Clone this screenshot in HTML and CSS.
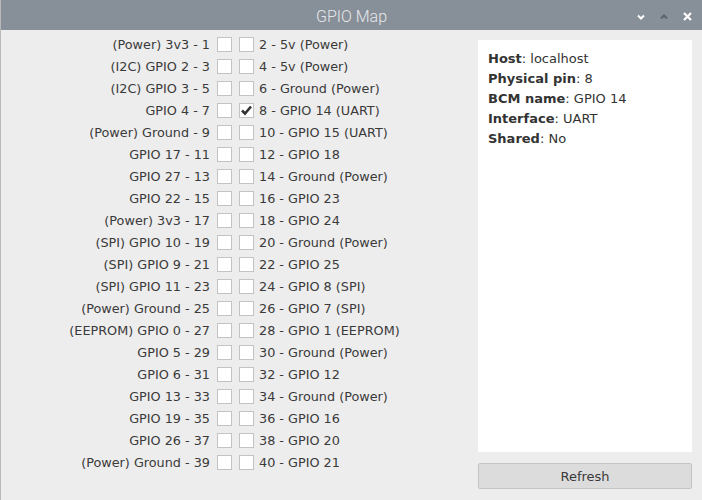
FILE: index.html
```html
<!DOCTYPE html>
<html>
<head>
<meta charset="utf-8">
<link rel="stylesheet" href="styles.css">
</head>
<body>
<div class="window">
  <div class="titlebar">
    <span class="title">GPIO Map</span>
    <div class="controls">
      <svg class="ctl" width="8" height="6" viewBox="0 0 8 6"><path d="M1 1.5 L4 4.5 L7 1.5" fill="none" stroke="#ffffff" stroke-width="2"/></svg>
      <svg class="ctl" width="8" height="6" viewBox="0 0 8 6"><path d="M1 4.5 L4 1.5 L7 4.5" fill="none" stroke="#5e646b" stroke-width="2"/></svg>
      <svg class="ctl" width="9" height="9" viewBox="0 0 9 9"><path d="M1 1 L8 8 M8 1 L1 8" fill="none" stroke="#ffffff" stroke-width="2.2"/></svg>
    </div>
  </div>
  <div class="content">
    <div class="pins">
      <div class="row"><span class="l">(Power) 3v3 - 1</span><span class="cb"></span><span class="cb"></span><span class="r">2 - 5v (Power)</span></div>
      <div class="row"><span class="l">(I2C) GPIO 2 - 3</span><span class="cb"></span><span class="cb"></span><span class="r">4 - 5v (Power)</span></div>
      <div class="row"><span class="l">(I2C) GPIO 3 - 5</span><span class="cb"></span><span class="cb"></span><span class="r">6 - Ground (Power)</span></div>
      <div class="row"><span class="l">GPIO 4 - 7</span><span class="cb"></span><span class="cb checked"><svg width="13" height="13" viewBox="0 0 13 13"><path d="M2 6.5 L5 9.5 L11 2.5" fill="none" stroke="#333" stroke-width="2.6"/></svg></span><span class="r">8 - GPIO 14 (UART)</span></div>
      <div class="row"><span class="l">(Power) Ground - 9</span><span class="cb"></span><span class="cb"></span><span class="r">10 - GPIO 15 (UART)</span></div>
      <div class="row"><span class="l">GPIO 17 - 11</span><span class="cb"></span><span class="cb"></span><span class="r">12 - GPIO 18</span></div>
      <div class="row"><span class="l">GPIO 27 - 13</span><span class="cb"></span><span class="cb"></span><span class="r">14 - Ground (Power)</span></div>
      <div class="row"><span class="l">GPIO 22 - 15</span><span class="cb"></span><span class="cb"></span><span class="r">16 - GPIO 23</span></div>
      <div class="row"><span class="l">(Power) 3v3 - 17</span><span class="cb"></span><span class="cb"></span><span class="r">18 - GPIO 24</span></div>
      <div class="row"><span class="l">(SPI) GPIO 10 - 19</span><span class="cb"></span><span class="cb"></span><span class="r">20 - Ground (Power)</span></div>
      <div class="row"><span class="l">(SPI) GPIO 9 - 21</span><span class="cb"></span><span class="cb"></span><span class="r">22 - GPIO 25</span></div>
      <div class="row"><span class="l">(SPI) GPIO 11 - 23</span><span class="cb"></span><span class="cb"></span><span class="r">24 - GPIO 8 (SPI)</span></div>
      <div class="row"><span class="l">(Power) Ground - 25</span><span class="cb"></span><span class="cb"></span><span class="r">26 - GPIO 7 (SPI)</span></div>
      <div class="row"><span class="l">(EEPROM) GPIO 0 - 27</span><span class="cb"></span><span class="cb"></span><span class="r">28 - GPIO 1 (EEPROM)</span></div>
      <div class="row"><span class="l">GPIO 5 - 29</span><span class="cb"></span><span class="cb"></span><span class="r">30 - Ground (Power)</span></div>
      <div class="row"><span class="l">GPIO 6 - 31</span><span class="cb"></span><span class="cb"></span><span class="r">32 - GPIO 12</span></div>
      <div class="row"><span class="l">GPIO 13 - 33</span><span class="cb"></span><span class="cb"></span><span class="r">34 - Ground (Power)</span></div>
      <div class="row"><span class="l">GPIO 19 - 35</span><span class="cb"></span><span class="cb"></span><span class="r">36 - GPIO 16</span></div>
      <div class="row"><span class="l">GPIO 26 - 37</span><span class="cb"></span><span class="cb"></span><span class="r">38 - GPIO 20</span></div>
      <div class="row"><span class="l">(Power) Ground - 39</span><span class="cb"></span><span class="cb"></span><span class="r">40 - GPIO 21</span></div>
    </div>
    <div class="side">
      <div class="info">
        <div><b>Host</b>: localhost</div>
        <div><b>Physical pin</b>: 8</div>
        <div><b>BCM name</b>: GPIO 14</div>
        <div><b>Interface</b>: UART</div>
        <div><b>Shared</b>: No</div>
      </div>
      <button class="btn">Refresh</button>
    </div>
  </div>
</div>
</body>
</html>
```
FILE: styles.css
```css
html, body {
  margin: 0;
  padding: 0;
}
body {
  width: 702px;
  height: 500px;
  overflow: hidden;
  background: #ededed;
  font-family: "DejaVu Sans", sans-serif;
  color: #3a3a3a;
}
.window {
  width: 702px;
  height: 500px;
  display: flex;
  flex-direction: column;
  box-sizing: border-box;
  border-left: 1px solid #b9b9b9;
}
.titlebar {
  height: 30px;
  flex: none;
  background: #878f98;
  display: flex;
  align-items: center;
  justify-content: center;
  position: relative;
  box-sizing: border-box;
  padding-top: 2px;
}
.title {
  font-family: Roboto, sans-serif;
  font-weight: 300;
  font-size: 16px;
  color: #e6e8ea;
}
.controls {
  position: absolute;
  right: 10px;
  top: 12px;
  display: flex;
  align-items: center;
  gap: 15px;
}
.ctl {
  display: block;
}
.content {
  flex: 1;
  display: flex;
  padding: 3px 10px 0 0;
}
.pins {
  width: 477px;
  display: flex;
  flex-direction: column;
}
.row {
  height: 22px;
  display: flex;
  align-items: center;
  font-size: 12.8px;
}
.l {
  width: 209px;
  text-align: right;
  white-space: nowrap;
}
.cb {
  width: 15px;
  height: 15px;
  box-sizing: border-box;
  border: 1px solid #c3c3c3;
  background: #ffffff;
  display: flex;
  align-items: center;
  justify-content: center;
  position: relative;
  top: 0.5px;
}
.l + .cb {
  margin-left: 7px;
}
.cb + .cb {
  margin-left: 7px;
}
.r {
  margin-left: 5px;
  white-space: nowrap;
}
.side {
  width: 214px;
  display: flex;
  flex-direction: column;
  padding-top: 7px;
}
.info {
  height: 412px;
  background: #ffffff;
  box-sizing: border-box;
  padding: 9px 10px;
  font-size: 13px;
  line-height: 20px;
  color: #333333;
}
.info b {
  font-weight: bold;
}
.btn {
  margin-top: 11px;
  height: 26px;
  width: 214px;
  background: #dcdcdc;
  border: 1px solid #c4c4c4;
  border-radius: 2px;
  font-family: "DejaVu Sans", sans-serif;
  font-size: 13px;
  color: #3a3a3a;
  padding: 0;
}
```
